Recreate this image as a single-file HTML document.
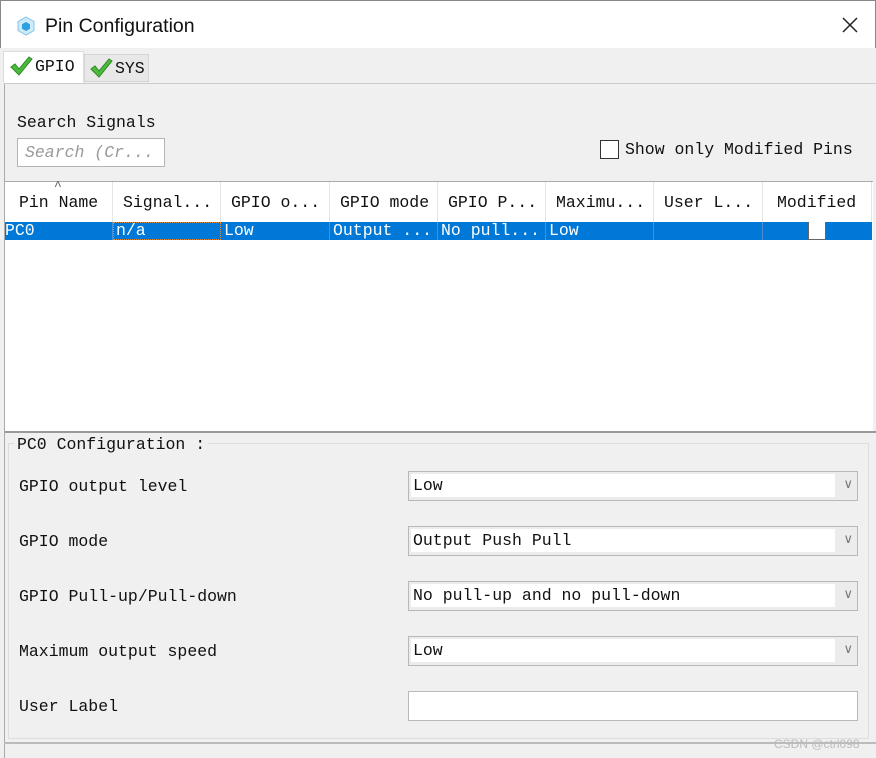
<!DOCTYPE html>
<html><head><meta charset="utf-8"><style>
*{margin:0;padding:0;box-sizing:border-box}
body{width:876px;height:758px;background:#f0f0f0;position:relative;overflow:hidden;font-family:"Liberation Mono",monospace;font-size:16.5px;color:#111}
.a{position:absolute}
.t{position:absolute;white-space:nowrap;line-height:20px}
.cb{position:absolute;left:408px;width:450px;height:30px;border:1px solid #b8b8b8;background:#ececec}
.cb .in{position:absolute;left:2px;top:2px;right:22px;bottom:3px;background:#fff}
.cb .v{position:absolute;left:4px;top:4px;line-height:20px}
.cb .ar{position:absolute;right:4px;top:4px;color:#777;font-family:"Liberation Sans",sans-serif;font-size:13px}
.h{position:absolute;top:182px;height:40px;border-right:1px solid #e5e5e5;padding:11px 0 0 0;line-height:20px;background:#fff}
.c{position:absolute;top:222px;height:18px;line-height:18px;color:#fff;border-right:1px solid #4a90d0}
</style></head><body>
<div class="a" style="left:0;top:0;width:876px;height:48px;background:#fff;border:1px solid #888;border-bottom:none"></div>
<svg class="a" style="left:16px;top:16px" width="20" height="20" viewBox="0 0 20 20"><path d="M10 1 L18 5.5 V14.5 L10 19 L2 14.5 V5.5 Z" fill="#cfeaf8" stroke="#7fc4ea"/><path d="M10 6 L14 8.3 V12.7 L10 15 L6 12.7 V8.3 Z" fill="#2e9fe0"/></svg>
<div class="t" style="left:45px;top:14px;font-family:'Liberation Sans',sans-serif;font-size:19.5px;line-height:24px">Pin Configuration</div>
<svg class="a" style="left:842px;top:17px" width="16" height="16" viewBox="0 0 16 16"><path d="M1 1 L15 15 M15 1 L1 15" stroke="#222" stroke-width="1.5"/></svg>
<div class="a" style="left:3px;top:51px;width:81px;height:32px;background:#fff;border:1px solid #ddd;border-bottom:none"></div>
<div class="a" style="left:84px;top:54px;width:65px;height:28px;background:#e8e8e8;border:1px solid #d5d5d5"></div>
<svg class="a" style="left:9px;top:55px" width="24" height="22" viewBox="0 0 24 22"><path d="M2 12 L6 9 L10 14 L20 2 L23 4 L10 20 Z" fill="#4cbb3c" stroke="#2e8a25" stroke-width="1"/></svg>
<div class="t" style="left:35px;top:57px">GPIO</div>
<svg class="a" style="left:89px;top:57px" width="24" height="22" viewBox="0 0 24 22"><path d="M2 12 L6 9 L10 14 L20 2 L23 4 L10 20 Z" fill="#4cbb3c" stroke="#2e8a25" stroke-width="1"/></svg>
<div class="t" style="left:115px;top:59px">SYS</div>
<div class="a" style="left:4px;top:83px;width:872px;height:1px;background:#ccc"></div>
<div class="a" style="left:4px;top:84px;width:1px;height:674px;background:#aaa"></div>
<div class="t" style="left:17px;top:113px">Search Signals</div>
<div class="a" style="left:17px;top:138px;width:148px;height:29px;background:#fff;border:1px solid #b5b5b5"></div>
<div class="t" style="left:25px;top:143px;color:#999;font-style:italic">Search (Cr...</div>
<div class="a" style="left:600px;top:140px;width:19px;height:19px;background:#fff;border:1px solid #333"></div>
<div class="t" style="left:625px;top:140px">Show only Modified Pins</div>
<div class="a" style="left:5px;top:181px;width:868px;height:252px;background:#fff;border-top:1px solid #aaa"></div>
<div class="h" style="left:5px;width:108px;padding-left:14px">Pin Name</div>
<div class="t" style="left:54px;top:177px;font-size:13px;color:#555">^</div>
<div class="h" style="left:113px;width:108px;padding-left:10px">Signal...</div>
<div class="h" style="left:221px;width:109px;padding-left:10px">GPIO o...</div>
<div class="h" style="left:330px;width:108px;padding-left:10px">GPIO mode</div>
<div class="h" style="left:438px;width:108px;padding-left:10px">GPIO P...</div>
<div class="h" style="left:546px;width:108px;padding-left:10px">Maximu...</div>
<div class="h" style="left:654px;width:109px;padding-left:10px">User L...</div>
<div class="h" style="left:763px;width:109px;padding-left:14px">Modified</div>
<div class="a" style="left:5px;top:222px;width:867px;height:18px;background:#0078d7"></div>
<div class="c" style="left:5px;width:108px">PC0</div>
<div class="c" style="left:113px;width:108px;border:1px dotted #e08a3a;padding-left:2px;line-height:16px">n/a</div>
<div class="c" style="left:221px;width:109px;padding-left:3px">Low</div>
<div class="c" style="left:330px;width:108px;padding-left:3px">Output ...</div>
<div class="c" style="left:438px;width:108px;padding-left:3px">No pull...</div>
<div class="c" style="left:546px;width:108px;padding-left:3px">Low</div>
<div class="c" style="left:654px;width:109px"></div>
<div class="a" style="left:808px;top:222px;width:18px;height:18px;background:#fff;border:1px solid #666;border-top:none"></div>
<div class="a" style="left:5px;top:431px;width:871px;height:2px;background:#999"></div>
<div class="a" style="left:8px;top:443px;width:861px;height:296px;border:1px solid #ddd"></div>
<div class="t" style="left:14px;top:435px;background:#f0f0f0;padding:0 3px">PC0 Configuration :</div>
<div class="t" style="left:19px;top:477px">GPIO output level</div>
<div class="t" style="left:19px;top:532px">GPIO mode</div>
<div class="t" style="left:19px;top:587px">GPIO Pull-up/Pull-down</div>
<div class="t" style="left:19px;top:642px">Maximum output speed</div>
<div class="t" style="left:19px;top:697px">User Label</div>
<div class="cb" style="top:471px"><div class="in"></div><div class="v">Low</div><div class="ar">∨</div></div>
<div class="cb" style="top:526px"><div class="in"></div><div class="v">Output Push Pull</div><div class="ar">∨</div></div>
<div class="cb" style="top:581px"><div class="in"></div><div class="v">No pull-up and no pull-down</div><div class="ar">∨</div></div>
<div class="cb" style="top:636px"><div class="in"></div><div class="v">Low</div><div class="ar">∨</div></div>
<div class="a" style="left:408px;top:691px;width:450px;height:30px;border:1px solid #b8b8b8;background:#fff"></div>
<div class="a" style="left:4px;top:742px;width:872px;height:2px;background:#bbb"></div>
<div class="t" style="left:774px;top:734px;font-family:'Liberation Sans',sans-serif;font-size:12px;color:#bbb">CSDN @ctrl098</div>
</body></html>
